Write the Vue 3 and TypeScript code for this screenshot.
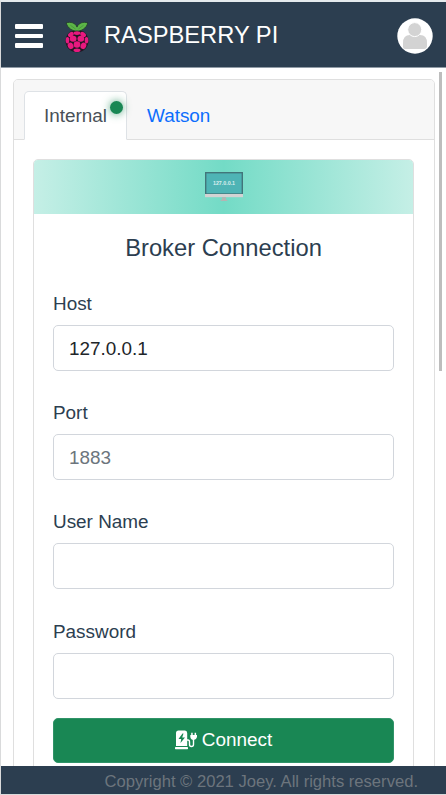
<script setup lang="ts">
import { ref } from 'vue'

interface Field {
  id: string
  label: string
  type: string
  placeholder: string
  value: string
}

const fields = ref<Field[]>([
  { id: 'host', label: 'Host', type: 'text', placeholder: '', value: '127.0.0.1' },
  { id: 'port', label: 'Port', type: 'text', placeholder: '1883', value: '' },
  { id: 'user', label: 'User Name', type: 'text', placeholder: '', value: '' },
  { id: 'password', label: 'Password', type: 'password', placeholder: '', value: '' },
])
const active = ref('Internal')
const tabs = ['Internal', 'Watson']
</script>

<template>
  <div class="app">
    <header class="topbar">
      <button class="menu" aria-label="Menu"><span></span><span></span><span></span></button>
      <svg class="logo" viewBox="0 0 26 34">
        <ellipse cx="13" cy="21.3" rx="12.2" ry="12" fill="#211722" />
        <path d="M13 10.5C9 11 3 8 1.500 2C6 .5 11.500 2 13 6.500C14.500 2 20 .5 24.500 2C23 8 17 11 13 10.500Z" fill="#5cb547" stroke="#1d3328" stroke-width=".8" />
        <path d="M6 4.500L11.500 8.500M20 4.500L14.500 8.500" stroke="#3c8238" stroke-width=".6" />
        <g fill="#e8197f">
          <ellipse cx="13" cy="12.800" rx="3.600" ry="2" />
          <ellipse cx="6.500" cy="14.300" rx="3.300" ry="2.300" transform="rotate(-35 6.500 14.300)" />
          <ellipse cx="19.500" cy="14.300" rx="3.300" ry="2.300" transform="rotate(35 19.500 14.300)" />
          <ellipse cx="8.900" cy="18.800" rx="3.600" ry="3.200" />
          <ellipse cx="17.100" cy="18.800" rx="3.600" ry="3.200" />
          <ellipse cx="2.900" cy="20.500" rx="1.900" ry="3.500" />
          <ellipse cx="23.100" cy="20.500" rx="1.900" ry="3.500" />
          <circle cx="13" cy="25" r="3.500" />
          <ellipse cx="6.200" cy="26.400" rx="3" ry="3.500" transform="rotate(-25 6.200 26.400)" />
          <ellipse cx="19.800" cy="26.400" rx="3" ry="3.500" transform="rotate(25 19.800 26.400)" />
          <ellipse cx="13" cy="31" rx="3.700" ry="1.900" />
        </g>
      </svg>
      <h1 class="brand">RASPBERRY PI</h1>
      <svg class="avatar" viewBox="0 0 36 36">
        <circle cx="18" cy="18" r="17.700" fill="#fff" />
        <path d="M6 30V25Q6 17 13 17H23Q30 17 30 25V28Q30 31 27 31H8Q6 31 6 29Z" fill="#d3d3d3" />
        <circle cx="17.700" cy="11.600" r="7" fill="#d3d3d3" stroke="#fff" stroke-width="1" />
      </svg>
    </header>

    <main class="content">
      <section class="panel">
        <nav class="tabs">
          <a v-for="t in tabs" :key="t" class="tab" :class="{ active: active === t }" @click="active = t">
            {{ t }}<i v-if="t === 'Internal'" class="status"></i>
          </a>
        </nav>
        <div class="panel-body">
          <form class="card" @submit.prevent>
            <div class="banner">
              <svg class="monitor" viewBox="0 0 38 30">
                <rect x=".7" y=".7" width="36.600" height="21.300" fill="#4eb4b5" stroke="#42757a" stroke-width="1.400" />
                <rect x="0" y="22" width="38" height="3.200" fill="#d3d3d3" />
                <path d="M17 25.200H21V27.500L23 29H15L17 27.500Z" fill="#b4b5b3" />
                <text x="19" y="13.300" text-anchor="middle">127.0.0.1</text>
              </svg>
            </div>
            <div class="card-body">
              <h2>Broker Connection</h2>
              <div v-for="f in fields" :key="f.id" class="field">
                <label :for="f.id">{{ f.label }}</label>
                <input :id="f.id" v-model="f.value" :type="f.type" :placeholder="f.placeholder" />
              </div>
              <button class="connect" type="submit">
                <svg viewBox="0 0 22 20">
                  <path fill="#fff" fill-rule="evenodd" d="M1 16V3Q1 .5 3.500 .5H10Q12.200 .5 12.200 3V16ZM7.500 3.500L3.500 9H6.200L5.500 13L10 7.400H7.200L8.500 3.500Z" />
                  <rect y="17" width="13" height="2.200" rx=".6" fill="#fff" />
                  <path d="M12 10H13Q14.500 10 14.500 12V14.500Q14.500 16.500 16.400 16.500Q18.500 16.500 18.500 14.500V9" fill="none" stroke="#fff" stroke-width="1.400" />
                  <path d="M16.200 2.800H17.700V5H19.600V2.800H21.100V5H22V7Q21.500 9.800 18.700 10Q15.800 9.800 15.300 7V5H16.200Z" fill="#fff" />
                </svg>
                <span>Connect</span>
              </button>
            </div>
          </form>
        </div>
      </section>
      <div class="scroll-thumb"></div>
    </main>

    <footer class="footer">Copyright © 2021 Joey. All rights reserved.</footer>
  </div>
</template>

<style>
body {
  overflow: hidden;
}
</style>

<style scoped>
* {
  box-sizing: border-box;
}
.app {
  display: flex;
  flex-direction: column;
  width: 446px;
  height: 795px;
  border: solid #d9dadb;
  border-width: 2px 0 1px 1px;
  border-top-color: #e5eaed;
  background: #fff;
  color: #2c3e50;
  font: 18.900px/28.500px "Liberation Sans", Arial, sans-serif;
  overflow: hidden;
}
.topbar {
  display: flex;
  flex: none;
  align-items: center;
  height: 66px;
  padding: 0 13px 0 14px;
  border-bottom: 1px solid #909ba6;
  background: #2c3e50;
}
.menu {
  display: grid;
  gap: 5px;
  width: 28px;
  margin-top: 3px;
  padding: 0;
  border: 0;
  background: none;
}
.menu span {
  height: 4.700px;
  border-radius: 1px;
  background: #fff;
}
.logo {
  width: 26px;
  height: 32px;
  margin: 5px 13px 0 21px;
}
.brand {
  margin: 2px auto 0 1px;
  color: #fff;
  font-size: 23.700px;
  font-weight: 400;
}
.avatar {
  width: 36px;
  height: 36px;
  margin-top: 3px;
}
.content {
  position: relative;
  flex: 1;
  min-height: 0;
  padding: 11px 11px 0 12px;
  overflow: hidden;
}
.panel {
  border: 1px solid #dfdfdf;
  border-radius: 5px;
  overflow: hidden;
}
.tabs {
  display: flex;
  height: 60px;
  padding: 11px 10px 0;
  border-bottom: 1px solid #dfdfdf;
  background: #f7f7f7;
}
.tab {
  position: relative;
  height: 49px;
  padding: 10px 19px;
  border: 1px solid transparent;
  border-radius: 5px 5px 0 0;
  color: #0d6efd;
}
.tab.active {
  border-color: #dee2e6 #dee2e6 #fff;
  background: #fff;
  color: #495057;
}
.status {
  position: absolute;
  top: 8.500px;
  right: 3.500px;
  width: 13px;
  height: 13px;
  border-radius: 50%;
  background: #198754;
  box-shadow: 0 0 8px rgba(25, 135, 84, .75);
}
.panel-body {
  padding: 19px 20px 19px 19px;
}
.card {
  margin: 0;
  border: 1px solid #dfdfdf;
  border-radius: 5px;
  overflow: hidden;
}
.banner {
  display: flex;
  justify-content: center;
  height: 54px;
  padding-top: 12px;
  background: linear-gradient(90deg, #c5efe6, #73dbc6 50%, #c5efe6);
}
.monitor {
  width: 38px;
  height: 30px;
}
.monitor text {
  fill: #d9eeee;
  font: bold 5.300px "Liberation Sans", sans-serif;
}
.card-body {
  padding: 20px 19px 30px;
}
h2 {
  margin: 0 0 26px;
  font-size: 23.750px;
  font-weight: 400;
  line-height: 28.500px;
  text-align: center;
}
.field {
  display: grid;
  gap: 8px;
  margin-bottom: 27.400px;
}
.field:last-of-type {
  margin-bottom: 19px;
}
input {
  width: 100%;
  height: 46px;
  padding: 2px 15px 0;
  border: 1px solid #d2d6dc;
  border-radius: 5px;
  outline: 0;
  background: #fff;
  color: #212529;
  font: inherit;
}
label {
  height: 28px;
  line-height: 29.500px;
}
input::placeholder {
  color: #6c757d;
  opacity: 1;
}
.connect {
  display: flex;
  align-items: center;
  justify-content: center;
  gap: 5px;
  width: 100%;
  height: 45px;
  padding: 0;
  border: 1px solid #309368;
  border-radius: 5px;
  background: #198754;
  color: #fff;
  font: inherit;
}
.connect svg {
  width: 22px;
  height: 20px;
}
.scroll-thumb {
  position: absolute;
  top: 4px;
  right: 4px;
  width: 3px;
  height: 299px;
  background: #bdbdbd;
}
.footer {
  flex: none;
  height: 28px;
  padding-right: 28px;
  background: #2c3e50;
  color: #6c757d;
  font-size: 16.600px;
  line-height: 31px;
  text-align: right;
  white-space: nowrap;
}
</style>
